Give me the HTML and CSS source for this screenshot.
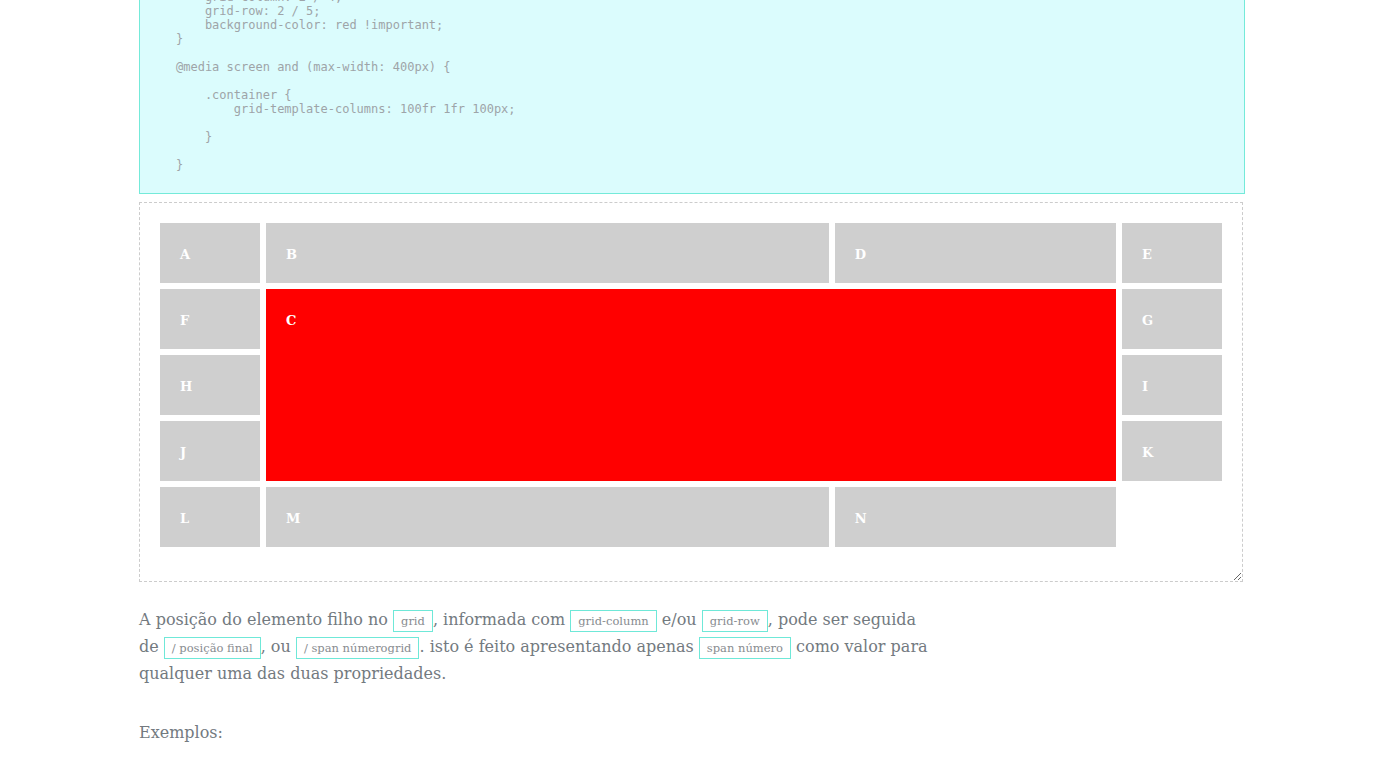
FILE: index.html
```html
<!DOCTYPE html>
<html lang="pt">
<head>
<meta charset="utf-8">
<title>Grid</title>
<link rel="stylesheet" href="styles.css">
</head>
<body>
<main class="page">
<pre class="code">    grid-column: 2 / 4;
    grid-row: 2 / 5;
    background-color: red !important;
}

@media screen and (max-width: 400px) {

    .container {
        grid-template-columns: 100fr 1fr 100px;

    }

}</pre>
<div class="container">
  <div class="item">A</div>
  <div class="item">B</div>
  <div class="item">D</div>
  <div class="item">E</div>
  <div class="item">F</div>
  <div class="item item-c">C</div>
  <div class="item">G</div>
  <div class="item">H</div>
  <div class="item">I</div>
  <div class="item">J</div>
  <div class="item">K</div>
  <div class="item">L</div>
  <div class="item">M</div>
  <div class="item">N</div>
</div>
<p class="text">A posição do elemento filho no <code class="tag">grid</code>, informada com <code class="tag">grid-column</code> e/ou <code class="tag">grid-row</code>, pode ser seguida de <code class="tag">/ posição final</code>, ou <code class="tag">/ span númerogrid</code>. isto é feito apresentando apenas <code class="tag">span número</code> como valor para qualquer uma das duas propriedades.</p>
<p class="text">Exemplos:</p>
</main>
</body>
</html>
```
FILE: styles.css
```css
html, body {
  margin: 0;
  padding: 0;
  background: #fff;
}
.page {
  width: 1106px;
  margin: -10px 0 0 139px;
}
.code {
  margin: 0;
  padding: 0 0 21px 36px;
  background: #dbfcfd;
  border: 1px solid #74ead9;
  border-top: none;
  font-family: "DejaVu Sans Mono", monospace;
  font-size: 12px;
  line-height: 14px;
  color: #9ea4a8;
}
.container {
  box-sizing: border-box;
  width: 1104px;
  height: 380px;
  margin-top: 8px;
  padding: 20px;
  border: 1px dashed #cccccc;
  display: grid;
  grid-template-columns: 100px 2fr 1fr 100px;
  grid-auto-rows: 60px;
  gap: 6px;
  align-content: start;
  resize: both;
  overflow: auto;
}
.item {
  background: #cfcfcf;
  color: #fff;
  font-family: "DejaVu Serif", serif;
  font-weight: bold;
  font-size: 13px;
  line-height: 20px;
  padding: 22px 20px 18px;
}
.item-c {
  grid-column: 2 / 4;
  grid-row: 2 / 5;
  background: #ff0000;
}
.text {
  max-width: 790px;
  margin: 24px 0 0;
  font-family: "DejaVu Serif", serif;
  font-size: 16px;
  line-height: 27px;
  color: #737a7f;
}
.text + .text {
  margin-top: 32px;
}
.tag {
  font-family: "DejaVu Serif", serif;
  font-size: 11.5px;
  line-height: 14px;
  color: #888c90;
  border: 1px solid #6fe8d8;
  padding: 3px 7px;
  white-space: nowrap;
}
```
